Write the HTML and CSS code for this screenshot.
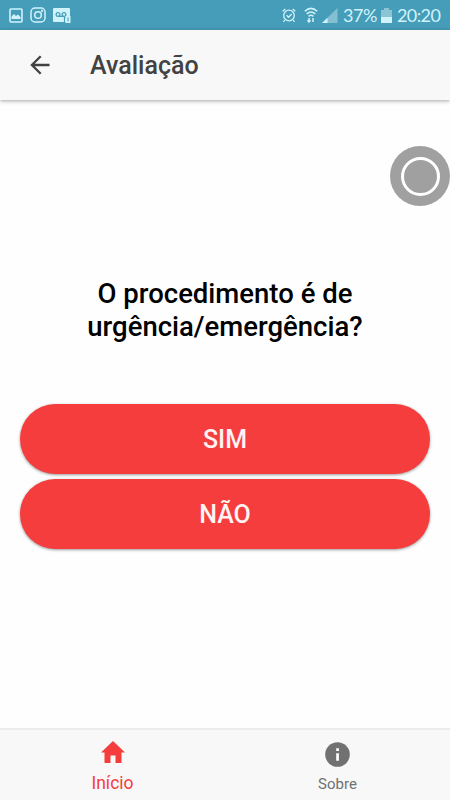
FILE: index.html
```html
<!DOCTYPE html>
<html lang="pt-br">
<head>
    <meta charset="UTF-8">
    <meta name="viewport" content="width=device-width, initial-scale=1.0">
    <title>Avaliação</title>
    <link rel="stylesheet" href="styles.css">
</head>
<body>
    <div class="app">
        <div class="status">
            <div class="notificacoes">
                <svg width="14" height="15" viewBox="0 0 14 15">
                    <rect x="1" y="1" width="12" height="13" rx="1" fill="none" stroke="currentColor" stroke-width="1.6"/>
                    <path d="M2.5 11V8.5L5 6l2 2 2-1.5L11.500 9v2z" fill="currentColor"/>
                </svg>
                <svg width="16" height="16" viewBox="0 0 16 16" fill="none" stroke="currentColor" stroke-width="1.5">
                    <rect x="1" y="1" width="14" height="14" rx="4"/>
                    <circle cx="8" cy="8" r="3.300"/>
                    <circle cx="12" cy="4" r=".4"/>
                </svg>
                <svg width="18" height="15" viewBox="0 0 18 15">
                    <rect width="17" height="14" rx="1" fill="currentColor"/>
                    <g fill="none" stroke="#469db9" stroke-width="1.2">
                        <circle cx="5" cy="6.500" r="1.900"/>
                        <circle cx="11" cy="6.500" r="1.900"/>
                        <path d="M5 8.400h6M11.500 14V9.500H14"/>
                    </g>
                    <path d="M12.500 8h5v7h-5z" fill="currentColor"/>
                    <path d="M15 9.500v4" stroke="#469db9"/>
                </svg>
            </div>
            <div class="sistema">
                <svg class="alarme" width="14" height="15" viewBox="0 0 14 15" fill="none" stroke="currentColor" stroke-width="1.300">
                    <circle cx="7" cy="7.500" r="5.300"/>
                    <path d="M4.500 7.300l2 2L9.700 6M.7 3.300L3.300 1M13.300 3.300L10.700 1M2.800 12l-1.300 2M11.200 12l1.300 2"/>
                </svg>
                <svg class="wifi" width="14" height="16" viewBox="0 0 14 16" fill="none" stroke="currentColor" stroke-width="1.500">
                    <path d="M.8 4.300Q7-1.500 13.200 4.300M2.700 6.900Q7 3 11.300 6.900M4.600 9.300Q7 7.400 9.400 9.300"/>
                    <path d="M5 11v4M3.500 13.300L5 15l1.500-1.700M9 15v-4"/>
                </svg>
                <svg class="sinal" width="16" height="15" viewBox="0 0 16 15">
                    <path d="M0 15L15.500 0v15z" fill="#83c0d2"/>
                    <path d="M0 15l5.500-5.300V15z" fill="currentColor"/>
                </svg>
                <span class="bateria-valor">37%</span>
                <svg class="bateria" width="11" height="15" viewBox="0 0 11 15">
                    <path d="M3 0h5v2h3v13H0V2h3z" fill="#8bc5d5"/>
                    <path d="M0 9h11v6H0z" fill="currentColor"/>
                </svg>
                <span class="hora">20:20</span>
            </div>
        </div>

        <header class="topo">
            <svg class="voltar" width="20" height="20" viewBox="0 0 20 20" fill="none" stroke="currentColor" stroke-width="2.300">
                <path d="M19.500 10H2M10.700 1.200L1.900 10l8.800 8.800"/>
            </svg>
            <h1>Avaliação</h1>
        </header>

        <main class="conteudo">
            <h2>O procedimento é de<br>urgência/emergência?</h2>
            <button class="botao" type="button">SIM</button>
            <button class="botao" type="button">NÃO</button>
        </main>

        <nav class="abas">
            <a class="aba ativa">
                <svg width="24" height="23" viewBox="0 0 24 23" fill="currentColor">
                    <path d="M9.500 23v-7.500h5V23h6V12.500H24L12 1 0 12.500h3.500V23z"/>
                </svg>
                <span>Início</span>
            </a>
            <a class="aba">
                <svg width="25" height="25" viewBox="0 0 25 25">
                    <circle cx="12.500" cy="12.500" r="12.300" fill="currentColor"/>
                    <path d="M11.200 6.300h2.700v2.600h-2.700zM11.200 11.200h2.700v7.500h-2.700z" fill="#fff"/>
                </svg>
                <span>Sobre</span>
            </a>
        </nav>

        <!-- botao flutuante -->
        <div class="flutuante"></div>
    </div>
</body>
</html>
```

FILE: styles.css
```css
* {
    padding: 0;
    margin: 0;
    box-sizing: border-box;
    font-family: Roboto, Arial, sans-serif;
}

.app {
    position: relative;
    height: 800px;
    display: flex;
    flex-direction: column;
    background: #fefefe;
    overflow: hidden;
}

/* Barra de status */

.status {
    height: 30px;
    flex-shrink: 0;
    display: flex;
    justify-content: space-between;
    align-items: center;
    padding: 0 10px 0 9px;
    background: #469db9;
    color: #d0f3fb;
}

.notificacoes, .sistema {
    display: flex;
    align-items: center;
}

.notificacoes {
    gap: 7px;
}

.sistema .wifi {
    margin-left: 8px;
}

.sistema .sinal {
    margin-left: 4px;
}

.sistema span {
    font-family: Lato, sans-serif;
    font-size: 18px;
    line-height: 31px;
    white-space: nowrap;
}

.bateria-valor {
    width: 33px;
    margin-left: 5px;
    letter-spacing: -.5px;
}

.bateria {
    margin-left: 5px;
}

.hora {
    width: 43px;
    margin-left: 5px;
    letter-spacing: -.6px;
}

/* Topo */

.topo {
    height: 70px;
    flex-shrink: 0;
    display: flex;
    align-items: center;
    padding-left: 30px;
    background: #f8f8f8;
    color: #424242;
    box-shadow: 0 1px 4px rgba(0, 0, 0, .35);
}

.topo h1 {
    margin-left: 40px;
    padding-top: 2px;
    font-size: 25px;
    font-weight: 500;
    line-height: 30px;
}

/* Pergunta e respostas */

.conteudo {
    flex: 1;
    padding: 177px 20px 0;
}

.conteudo h2 {
    margin-bottom: 61px;
    font-size: 27.500px;
    font-weight: 500;
    line-height: 33px;
    text-align: center;
    color: #000;
}

.botao {
    display: block;
    width: 100%;
    height: 70px;
    margin-bottom: 5px;
    font-size: 25px;
    font-weight: 500;
    color: #fff3f3;
    background: #f53d3d;
    border: none;
    border-radius: 35px;
    box-shadow: 0 1px 3px rgba(0, 0, 0, .4);
}

/* Abas */

.abas {
    height: 72px;
    flex-shrink: 0;
    display: flex;
    background: #f8f8f8;
    border-top: 2px solid #ececec;
}

.aba {
    flex: 1;
    display: flex;
    flex-direction: column;
    align-items: center;
    padding-top: 12px;
    font-size: 15px;
    color: #717171;
}

.aba span {
    margin-top: 7px;
    line-height: 20px;
}

.aba.ativa {
    padding-top: 10px;
    font-size: 17.500px;
    color: #f53d3d;
}

.aba.ativa span {
    margin-top: 10px;
}

.flutuante {
    position: absolute;
    top: 146px;
    right: 0;
    width: 60px;
    height: 60px;
    border-radius: 50%;
    background: #a0a0a0;
}

.flutuante::after {
    content: "";
    position: absolute;
    top: 10.500px;
    left: 10.500px;
    width: 33px;
    height: 33px;
    border: 3px solid #fff;
    border-radius: 50%;
}
```
